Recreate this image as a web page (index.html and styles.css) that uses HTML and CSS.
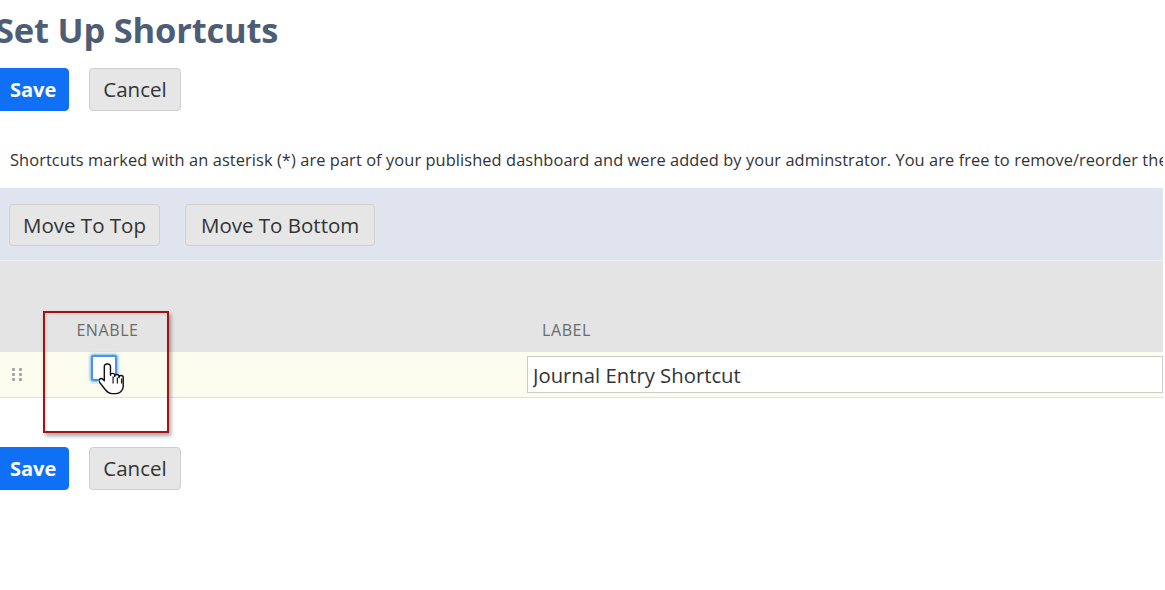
FILE: index.html
```html
<!DOCTYPE html>
<html lang="en">
<head>
<meta charset="utf-8">
<title>Set Up Shortcuts</title>
<link rel="stylesheet" href="styles.css">
</head>
<body>
<div class="page">
  <div class="head">
    <h1 class="title">Set Up Shortcuts</h1>
    <div class="actions">
      <button class="btn btn-primary">Save</button>
      <button class="btn btn-secondary">Cancel</button>
    </div>
  </div>

  <p class="note">Shortcuts marked with an asterisk (*) are part of your published dashboard and were added by your adminstrator. You are free to remove/reorder them.</p>

  <div class="toolbar">
    <button class="btn btn-secondary btn-tool">Move To Top</button>
    <button class="btn btn-secondary btn-tool btn-wide">Move To Bottom</button>
  </div>

  <div class="table">
    <div class="thead">
      <div class="th"></div>
      <div class="th th-center">ENABLE</div>
      <div class="th"></div>
      <div class="th th-label">LABEL</div>
    </div>
    <div class="trow">
      <div class="td td-handle">
        <span class="handle"><i></i><i></i><i></i><i></i><i></i><i></i></span>
      </div>
      <div class="td td-center">
        <span class="check"></span>
      </div>
      <div class="td"></div>
      <div class="td td-input">
        <input class="text-input" type="text" value="Journal Entry Shortcut">
      </div>
    </div>
    <div class="highlight"></div>
    <svg class="cursor" width="26" height="36" viewBox="0 0 22 30" aria-hidden="true">
      <path d="M6.5 1.5c-1.1 0-2 .9-2 2v12.2l-1.3-1.4c-.8-.8-2-.8-2.7 0-.7.7-.7 1.8-.1 2.6l5 6.4c1.3 1.7 3 3.2 5.4 3.2h3.4c3.4 0 6.3-2.8 6.3-6.3v-7.2c0-1-.8-1.8-1.8-1.8s-1.8.8-1.8 1.8v-.9c0-1-.8-1.8-1.8-1.8s-1.8.8-1.8 1.8v-.9c0-1-.8-1.8-1.8-1.8s-1.7.7-1.8 1.6V3.5c0-1.1-.9-2-2-2z" fill="#fff" stroke="#111" stroke-width="1.2" stroke-linejoin="round"/>
      <path d="M11.9 12v6M15.5 12.9v5.1M19.1 13.8v4.2" stroke="#111" stroke-width="1" fill="none"/>
    </svg>
  </div>

  <div class="actions actions-bottom">
    <button class="btn btn-primary">Save</button>
    <button class="btn btn-secondary">Cancel</button>
  </div>
</div>
</body>
</html>
```

FILE: styles.css
```css
* { box-sizing: border-box; }

html, body {
  margin: 0;
  padding: 0;
  background: #ffffff;
  overflow: hidden;
}

body {
  font-family: "Open Sans", "Liberation Sans", Arial, sans-serif;
  color: #333333;
  width: 1165px;
  height: 590px;
}

.page {
  width: 1163px;
}

.head {
  margin-left: -5px;
}

.title {
  margin: 0;
  padding-top: 10px;
  font-size: 34.5px;
  line-height: 40px;
  font-weight: 700;
  color: #4d5d76;
  letter-spacing: -0.2px;
}

.actions {
  display: flex;
  gap: 20px;
  margin-top: 18px;
}

.btn {
  font-family: "Open Sans", "Liberation Sans", Arial, sans-serif;
  font-size: 20.5px;
  height: 43px;
  padding: 0 13px;
  border-radius: 4px;
  cursor: pointer;
  line-height: 41px;
}

.btn-primary {
  background: #0f6ff5;
  border: 1px solid #0f6ff5;
  color: #ffffff;
  font-weight: 700;
  font-size: 20px;
  padding: 0 12px 0 14px;
}

.btn-secondary {
  background: #e6e6e6;
  border: 1px solid #cfcfcf;
  color: #333333;
  font-weight: 400;
}

.note {
  margin: 39px 0 0 10px;
  font-size: 16.4px;
  letter-spacing: 0.08px;
  line-height: 20px;
  white-space: nowrap;
  overflow: hidden;
  color: #333333;
}

.toolbar {
  margin-top: 18px;
  background: #dfe4ee;
  display: flex;
  gap: 25px;
  padding: 16px 9px 14px;
  border-bottom: 1px solid #eef0f4;
}

.btn-tool {
  height: 42px;
  padding: 0 13px;
}

.btn-wide {
  padding: 0 15px;
}

.table {
  position: relative;
}

.thead {
  display: grid;
  grid-template-columns: 40px 135px 352px 1fr;
  background: #e4e4e4;
  height: 91px;
  align-items: end;
}

.th {
  font-size: 16px;
  letter-spacing: 0.6px;
  color: #6b6b6b;
  padding-bottom: 12px;
  line-height: 20px;
}

.th-center { text-align: center; }

.th-label { padding-left: 15px; }

.trow {
  display: grid;
  grid-template-columns: 40px 135px 352px 1fr;
  background: #fcfdef;
  height: 46px;
  border-bottom: 1px solid #e2e2dc;
  align-items: center;
}

.td-handle {
  padding-left: 12px;
}

.handle {
  display: grid;
  grid-template-columns: 3px 3px;
  column-gap: 4px;
  row-gap: 2px;
  width: 10px;
}

.handle i {
  display: block;
  width: 3px;
  height: 3px;
  background: #a3a3a3;
  border-radius: 1px;
}

.td-center {
  display: flex;
  justify-content: center;
  padding-bottom: 13px;
  padding-right: 7px;
}

.check {
  display: block;
  width: 26px;
  height: 26px;
  background: #ffffff;
  border: 2px solid #4a93ea;
  border-radius: 2px;
  box-shadow: 0 0 3px 1px rgba(70, 150, 240, 0.7);
}

.td-input {
  padding-top: 4px;
  align-self: start;
}

.text-input {
  display: block;
  width: 100%;
  height: 37px;
  border: 1px solid #cccccc;
  background: #ffffff;
  font-family: "Open Sans", "Liberation Sans", Arial, sans-serif;
  font-size: 20.3px;
  color: #333333;
  padding: 0 5px;
  outline: none;
}

.highlight {
  position: absolute;
  left: 43px;
  top: 50px;
  width: 126px;
  height: 122px;
  border: 2px solid #9b1616;
  box-shadow: 2px 3px 4px rgba(0, 0, 0, 0.35), inset 1px 1px 3px rgba(0, 0, 0, 0.15);
}

.cursor {
  position: absolute;
  left: 99px;
  top: 101px;
}

.actions-bottom {
  margin-top: 49px;
  margin-left: -5px;
}
```
